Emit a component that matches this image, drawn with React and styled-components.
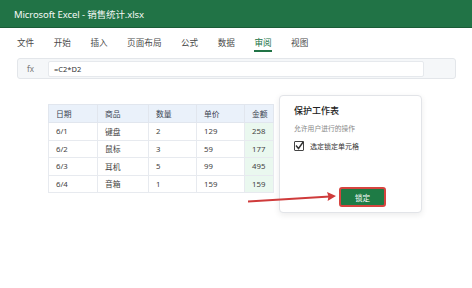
import React from "react";
import styled, { createGlobalStyle } from "styled-components";

const Global = createGlobalStyle`
  html, body { margin: 0; padding: 0; background: #ffffff; }
  body { font-family: "Noto Sans", "Noto Sans CJK SC", sans-serif; color: #333; }
  * { box-sizing: border-box; }
`;

const Page = styled.div`
  position: relative;
  width: 472px;
  height: 288px;
  overflow: hidden;
  background: #fff;
`;

const TitleBar = styled.div`
  height: 28px;
  background: #217346;
  border-bottom: 1px solid #1a5c37;
  display: flex;
  align-items: center;
  padding-left: 14px;
  color: #f4f8f5;
  font-size: 9.5px;
  letter-spacing: -0.1px;
`;

const MenuBar = styled.div`
  display: flex;
  gap: 19.5px;
  padding: 0 17px;
  margin-bottom: 6px;
`;

const Tab = styled.div`
  padding-top: 9px;
  padding-bottom: 1px;
  line-height: 12px;
  font-size: 8.6px;
  color: ${(p) => (p.$active ? "#217346" : "#4a4a4a")};
  border-bottom: 2px solid ${(p) => (p.$active ? "#217346" : "transparent")};
`;

const FormulaBar = styled.div`
  margin: 0 16px 0 17px;
  height: 21px;
  background: #f5f7f9;
  border: 1px solid #e3e6ea;
  border-radius: 3px;
  display: flex;
  align-items: center;
  padding: 0 31px 0 9px;
`;

const Fx = styled.span`
  width: 21px;
  font-size: 8px;
  color: #777;
`;

const FormulaInput = styled.div`
  flex: 1;
  height: 16px;
  background: #fff;
  border: 1px solid #e6e9ed;
  border-radius: 2px;
  display: flex;
  align-items: center;
  padding-left: 5px;
  font-size: 7.5px;
  color: #333;
`;

const Content = styled.div`
  display: flex;
  align-items: flex-start;
  gap: 5px;
  padding-left: 48px;
  margin-top: 16px;
`;

const Table = styled.table`
  margin-top: 9px;
  border-collapse: collapse;
  border: 1px solid #e4e8ee;
  font-size: 7.8px;
  color: #444;
  table-layout: fixed;
`;

const Th = styled.th`
  width: ${(p) => p.$w}px;
  height: 18px;
  background: #eaf1fa;
  border: 1px solid #e1e6ee;
  text-align: left;
  padding: 0 0 0 7px;
  font-weight: 400;
  color: #3b4452;
`;

const Td = styled.td`
  height: 17.5px;
  border: 1px solid #e7eaef;
  padding: 0 0 0 7px;
  background: ${(p) => (p.$hl ? "#eaf8ef" : "#fff")};
`;

const Dialog = styled.div`
  width: 143px;
  height: 118px;
  background: #fff;
  border: 1px solid #e2e4e8;
  border-radius: 4px;
  box-shadow: 0 2px 6px rgba(0, 0, 0, 0.08);
  padding: 8px 14px 5px 14px;
  display: flex;
  flex-direction: column;
`;

const DialogTitle = styled.div`
  font-size: 9px;
  line-height: 14px;
  font-weight: 500;
  color: #222;
`;

const DialogHint = styled.div`
  margin-top: 6px;
  font-size: 6.8px;
  line-height: 10px;
  color: #888;
`;

const CheckRow = styled.label`
  margin-top: 6px;
  display: flex;
  align-items: center;
  gap: 6px;
  height: 12px;
  font-size: 7px;
  color: #333;
`;

const Box = styled.span`
  width: 10px;
  height: 10px;
  border: 1px solid #444;
  border-radius: 1px;
  display: inline-flex;
  align-items: center;
  justify-content: center;
  position: relative;
`;

const LockButton = styled.button`
  margin-top: auto;
  margin-left: 45px;
  align-self: flex-start;
  width: 47px;
  height: 20px;
  background: #1e7b45;
  border: 2px solid #d6443f;
  border-radius: 3px;
  color: #fff;
  font-family: "Noto Sans", "Noto Sans CJK SC", sans-serif;
  font-size: 7.5px;
  padding: 0;
  display: flex;
  align-items: center;
  justify-content: center;
`;

const Overlay = styled.svg`
  position: absolute;
  left: 0;
  top: 0;
  pointer-events: none;
`;

const tabs = ["文件", "开始", "插入", "页面布局", "公式", "数据", "审阅", "视图"];
const cols = [
  ["日期", 49],
  ["商品", 51],
  ["数量", 48],
  ["单价", 48],
  ["金额", 29],
];
const rows = [
  ["6/1", "键盘", "2", "129", "258"],
  ["6/2", "鼠标", "3", "59", "177"],
  ["6/3", "耳机", "5", "99", "495"],
  ["6/4", "音箱", "1", "159", "159"],
];

export default function App() {
  return (
    <Page>
      <Global />
      <TitleBar>Microsoft Excel - 销售统计.xlsx</TitleBar>
      <MenuBar>
        {tabs.map((t) => (
          <Tab key={t} $active={t === "审阅"}>
            {t}
          </Tab>
        ))}
      </MenuBar>
      <FormulaBar>
        <Fx>fx</Fx>
        <FormulaInput>=C2*D2</FormulaInput>
      </FormulaBar>
      <Content>
        <Table>
          <thead>
            <tr>
              {cols.map(([c, w]) => (
                <Th key={c} $w={w}>
                  {c}
                </Th>
              ))}
            </tr>
          </thead>
          <tbody>
            {rows.map((r) => (
              <tr key={r[0]}>
                {r.map((v, i) => (
                  <Td key={i} $hl={i === 4}>
                    {v}
                  </Td>
                ))}
              </tr>
            ))}
          </tbody>
        </Table>
        <Dialog>
          <DialogTitle>保护工作表</DialogTitle>
          <DialogHint>允许用户进行的操作</DialogHint>
          <CheckRow>
            <Box>
              <svg width="11" height="11" viewBox="0 0 11 11" style={{ position: "absolute", left: -1, top: -2 }}>
                <path d="M2 5.5 L4.5 8.5 L9.5 1.5" fill="none" stroke="#333" strokeWidth="1.4" />
              </svg>
            </Box>
            选定锁定单元格
          </CheckRow>
          <LockButton>锁定</LockButton>
        </Dialog>
      </Content>
      <Overlay width="472" height="288" viewBox="0 0 472 288">
        <line x1="248" y1="201.5" x2="330" y2="196.5" stroke="#cf3b3b" strokeWidth="1.8" />
        <path d="M336 196 L327 192 L328.5 196.6 L327.6 201 Z" fill="#cf3b3b" />
      </Overlay>
    </Page>
  );
}
